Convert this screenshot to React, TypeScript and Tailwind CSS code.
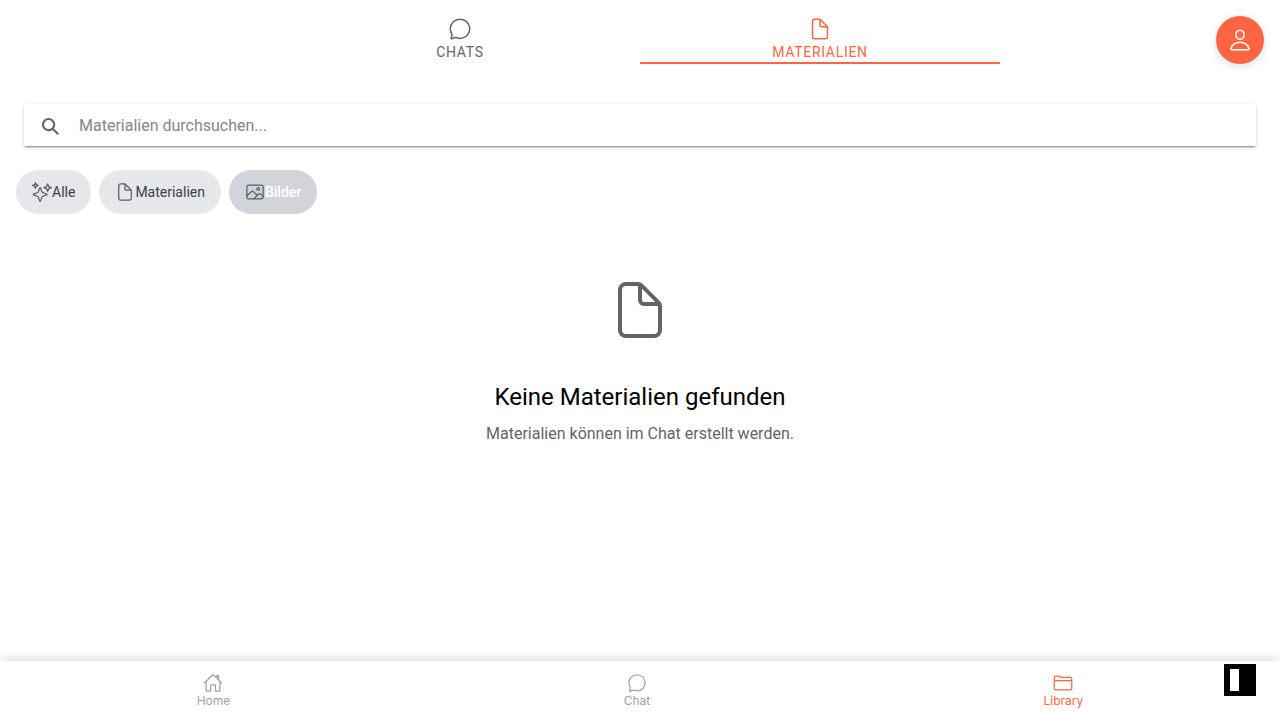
import { useState } from "react";
import {
  IoChatbubbleOutline,
  IoDocumentOutline,
  IoFolderOutline,
  IoHomeOutline,
  IoImageOutline,
  IoPersonOutline,
  IoSearchSharp,
  IoSparklesOutline,
} from "react-icons/io5";

const segments = [
  { label: "Chats", icon: IoChatbubbleOutline, active: false },
  { label: "Materialien", icon: IoDocumentOutline, active: true },
];

const filters = [
  { label: "Alle", icon: IoSparklesOutline, active: false },
  { label: "Materialien", icon: IoDocumentOutline, active: false },
  { label: "Bilder", icon: IoImageOutline, active: true },
];

const navigation = [
  { label: "Home", icon: IoHomeOutline, active: false },
  { label: "Chat", icon: IoChatbubbleOutline, active: false },
  { label: "Library", icon: IoFolderOutline, active: true },
];

export default function App() {
  const [query, setQuery] = useState("");

  return (
    <div className="flex min-h-screen flex-col bg-white font-[Roboto,sans-serif] text-black">
      <header className="flex justify-center pt-4">
        <div role="tablist" className="grid w-full max-w-[720px] grid-cols-2">
          {segments.map(({ label, icon: Icon, active }) => (
            <button
              key={label}
              role="tab"
              aria-selected={active}
              className={`flex h-12 flex-col items-center border-b-2 pt-px text-sm leading-[22px] font-normal tracking-wider uppercase ${
                active ? "border-[#ff6542] text-[#ff6542]" : "border-transparent text-[#666666]"
              }`}
            >
              <Icon className="size-6 shrink-0" />
              {label}
            </button>
          ))}
        </div>
        <button
          aria-label="Profil"
          className="absolute top-4 right-4 flex size-12 items-center justify-center rounded-full bg-[#ff6542] text-white shadow-[0_2px_8px_rgba(0,0,0,0.15)]"
        >
          <IoPersonOutline className="size-6" />
        </button>
      </header>

      <main className="flex-1 px-4 pt-10">
        <label className="mx-2 flex h-[42px] items-center gap-[18px] rounded-xs bg-white px-4 pt-0.5 shadow-[0_2px_2px_0_rgba(0,0,0,0.14),0_3px_1px_-2px_rgba(0,0,0,0.2),0_1px_5px_0_rgba(0,0,0,0.12)]">
          <IoSearchSharp className="size-[21px] shrink-0 text-[#666666]" />
          <input
            type="text"
            aria-label="Materialien durchsuchen"
            placeholder="Materialien durchsuchen..."
            value={query}
            onChange={(event) => setQuery(event.target.value)}
            className="min-w-0 flex-1 text-base text-[#262626] outline-none placeholder:text-[#868686]"
          />
        </label>

        <div className="mt-6 flex gap-2">
          {filters.map(({ label, icon: Icon, active }) => (
            <button
              key={label}
              aria-pressed={active}
              className={`flex h-11 items-center rounded-full px-4 text-sm ${
                active ? "bg-[#d1d5db] font-medium text-white" : "bg-[#e5e7eb] text-[#374151]"
              }`}
            >
              <Icon className="size-5 text-[#5c5e62]" />
              {label}
            </button>
          ))}
        </div>

        <section className="flex flex-col items-center pt-16 text-center">
          <IoDocumentOutline className="size-16 text-[#636469]" />
          <h2 className="mt-10 text-2xl leading-[30px]">Keine Materialien gefunden</h2>
          <p className="mt-2.5 text-base text-[#636469]">Materialien können im Chat erstellt werden.</p>
        </section>
      </main>

      <nav className="flex justify-around bg-white pt-3 pb-[11px] font-[Inter,sans-serif] shadow-[0_-2px_10px_rgba(0,0,0,0.15)]">
        {navigation.map(({ label, icon: Icon, active }) => (
          <a
            key={label}
            href="#"
            aria-current={active ? "page" : undefined}
            className={`flex flex-col items-center text-xs ${active ? "text-[#ff6542]" : "text-[#9ca3af]"}`}
          >
            <Icon className="size-5" />
            {label}
          </a>
        ))}
      </nav>

      <button aria-label="Seitenleiste" className="fixed right-6 bottom-6 flex size-8 bg-black px-1.5 py-[5px]">
        <span className="h-[22px] w-[9px] bg-white" />
      </button>
    </div>
  );
}
